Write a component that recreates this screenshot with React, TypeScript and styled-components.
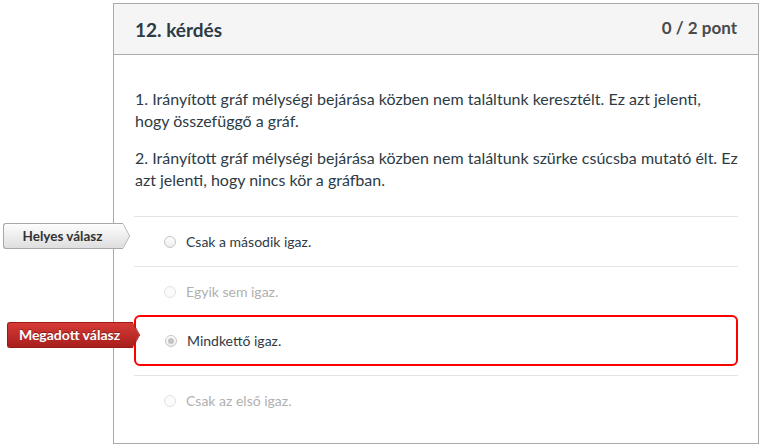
import React from "react";
import styled, { createGlobalStyle, css } from "styled-components";

const Global = createGlobalStyle`
  html, body { margin: 0; padding: 0; background: #fff; }
  body { font-family: Lato, "Open Sans", sans-serif; color: #2d3b45; }
`;

const Page = styled.div`
  padding: 3px 0 0 113px;
`;

const Card = styled.section`
  width: 646px;
  height: 441px;
  box-sizing: border-box;
  border: 1px solid #aaaaaa;
  background: #fff;
`;

const Header = styled.header`
  height: 50px;
  box-sizing: content-box;
  border-bottom: 1px solid #aaaaaa;
  background: #f5f5f5;
  display: flex;
  align-items: center;
  justify-content: space-between;
  padding: 0 21px;
`;

const Title = styled.h2`
  margin: 0;
  font-size: 19px;
  font-weight: 700;
  color: #2d3b45;
`;

const Points = styled.div`
  font-size: 17px;
  font-weight: 700;
  color: #4a4a4a;
  margin-top: -4px;
`;

const Body = styled.div`
  padding: 33px 20px 0 20px;
`;

const Paragraph = styled.p`
  margin: 0 0 15px 1px;
  font-size: 16px;
  line-height: 22px;
  color: #2d3b45;
`;

const Answers = styled.div`
  margin-top: 25px;
  display: flex;
  flex-direction: column;
`;

type Variant = "normal" | "muted" | "selected";

const Row = styled.div<{ $variant: Variant }>`
  position: relative;
  display: flex;
  align-items: center;
  gap: 10px;
  height: 49px;
  padding-left: 30px;
  border-top: 1px solid #e4e4e4;
  font-size: 14px;
  color: ${(p) => (p.$variant === "muted" ? "#b0b0b0" : "#2d3b45")};
  ${(p) =>
    p.$variant === "selected" &&
    css`
      height: 51px;
      box-sizing: border-box;
      border: 2px solid #ff0000;
      border-radius: 6px;
      padding-left: 29px;
      margin-bottom: 9px;
      margin-top: -1px;
    `}
`;

const Radio = styled.span<{ $checked?: boolean; $muted?: boolean }>`
  width: 12px;
  height: 12px;
  box-sizing: border-box;
  border-radius: 50%;
  border: 1px solid ${(p) => (p.$muted ? "#e3e3e3" : "#c6c6c6")};
  background: ${(p) => (p.$muted ? "#fbfbfb" : "linear-gradient(#ffffff, #ececec)")};
  display: flex;
  align-items: center;
  justify-content: center;
  flex-shrink: 0;
  &::after {
    content: "";
    display: ${(p) => (p.$checked ? "block" : "none")};
    width: 6px;
    height: 6px;
    border-radius: 50%;
    background: #c4c4c4;
  }
`;

const Tag = styled.div<{ $tone: "gray" | "red" }>`
  position: absolute;
  top: 50%;
  transform: translateY(-50%);
  margin-top: -6px;
  height: 26px;
  box-sizing: border-box;
  display: flex;
  align-items: center;
  justify-content: center;
  padding: 0 6px 0 4px;
  border-radius: 3px 0 0 3px;
  font-weight: 700;
  white-space: nowrap;
  ${(p) =>
    p.$tone === "gray"
      ? css`
          right: calc(100% + 11px);
          width: 120px;
          font-size: 13.5px;
          color: #333;
          background: linear-gradient(#fdfdfd, #dedede);
          border: 1px solid #a8a8a8;
          border-right: none;
        `
      : css`
          right: calc(100% + 3px);
          width: 126px;
          font-size: 14px;
          color: #fff;
          text-shadow: 0 -1px 0 rgba(0, 0, 0, 0.35);
          background: linear-gradient(#d63a35, #a81f1c);
          border: 1px solid #9b1a17;
          border-right: none;
        `}
  &::after {
    content: "";
    position: absolute;
    right: -9px;
    top: 50%;
    width: 17px;
    height: 17px;
    transform: translateY(-50%) scaleX(0.55) rotate(45deg);
    transform-origin: center;
    box-sizing: border-box;
    ${(p) =>
      p.$tone === "gray"
        ? css`
            background: linear-gradient(135deg, #fdfdfd, #dedede);
            border-top: 1px solid #a8a8a8;
            border-right: 1px solid #a8a8a8;
          `
        : css`
            background: linear-gradient(135deg, #d63a35, #a81f1c);
            border-top: 1px solid #9b1a17;
            border-right: 1px solid #9b1a17;
          `}
  }
`;

const TagText = styled.span`
  position: relative;
  z-index: 1;
`;

export default function App() {
  return (
    <>
      <Global />
      <Page>
        <Card>
          <Header>
            <Title>12. kérdés</Title>
            <Points>0 / 2 pont</Points>
          </Header>
          <Body>
            <Paragraph>
              1. Irányított gráf mélységi bejárása közben nem találtunk keresztélt. Ez azt jelenti,
              hogy összefüggő a gráf.
            </Paragraph>
            <Paragraph>
              2. Irányított gráf mélységi bejárása közben nem találtunk szürke csúcsba mutató élt. Ez
              azt jelenti, hogy nincs kör a gráfban.
            </Paragraph>
            <Answers>
              <Row $variant="normal">
                <Tag $tone="gray">
                  <TagText>Helyes válasz</TagText>
                </Tag>
                <Radio />
                <span>Csak a második igaz.</span>
              </Row>
              <Row $variant="muted">
                <Radio $muted />
                <span>Egyik sem igaz.</span>
              </Row>
              <Row $variant="selected">
                <Tag $tone="red">
                  <TagText>Megadott válasz</TagText>
                </Tag>
                <Radio $checked />
                <span>Mindkettő igaz.</span>
              </Row>
              <Row $variant="muted">
                <Radio $muted />
                <span>Csak az első igaz.</span>
              </Row>
            </Answers>
          </Body>
        </Card>
      </Page>
    </>
  );
}
